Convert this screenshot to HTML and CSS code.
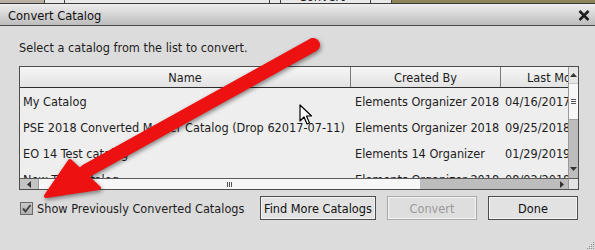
FILE: index.html
```html
<!DOCTYPE html>
<html>
<head>
<meta charset="utf-8">
<link rel="stylesheet" href="styles.css">
</head>
<body>
<div class="strip">
  <div class="strip-photo"></div>
  <div class="strip-cell w20"></div>
  <div class="strip-cell grow"></div>
  <div class="strip-cell w11"></div>
  <div class="strip-cell w90"><span class="strip-text">Convert</span></div>
  <div class="strip-cell w21"></div>
  <div class="strip-photo2"></div>
</div>
<div class="dialog">
  <div class="titlebar">
    <span class="title">Convert Catalog</span>
    <svg class="close" width="12" height="11" viewBox="0 0 12 11"><path d="M1.5 1 L10.5 10 M10.5 1 L1.5 10" stroke="#1e1e1e" stroke-width="2.6" fill="none"/></svg>
  </div>
  <div class="content">
    <p class="intro">Select a catalog from the list to convert.</p>
    <div class="table">
      <div class="viewport">
        <div class="row head">
          <div class="c c1">Name</div>
          <div class="c c2">Created By</div>
          <div class="c c3">Last Modified</div>
        </div>
        <div class="row">
          <div class="c c1">My Catalog</div>
          <div class="c c2">Elements Organizer 2018</div>
          <div class="c c3">04/16/2017</div>
        </div>
        <div class="row">
          <div class="c c1">PSE 2018 Converted Master Catalog (Drop 62017-07-11)</div>
          <div class="c c2">Elements Organizer 2018</div>
          <div class="c c3">09/25/2018</div>
        </div>
        <div class="row">
          <div class="c c1">EO 14 Test catalog</div>
          <div class="c c2">Elements 14 Organizer</div>
          <div class="c c3">01/29/2019</div>
        </div>
        <div class="row">
          <div class="c c1">New Test catalog</div>
          <div class="c c2">Elements Organizer 2018</div>
          <div class="c c3">08/02/2018</div>
        </div>
      </div>
      <div class="vscroll">
        <div class="vbtn">
          <svg width="7" height="4" viewBox="0 0 7 4"><path d="M0 4 L3.5 0 L7 4 Z" fill="#333"/></svg>
        </div>
        <div class="vthumb"><span class="grip-h"></span></div>
        <div class="vtrack"></div>
        <div class="vbtn down">
          <svg width="7" height="4" viewBox="0 0 7 4"><path d="M0 0 L3.5 4 L7 0 Z" fill="#333"/></svg>
        </div>
      </div>
      <div class="hscroll">
        <div class="hbtn">
          <svg width="4" height="7" viewBox="0 0 4 7"><path d="M4 0 L0 3.5 L4 7 Z" fill="#333"/></svg>
        </div>
        <div class="hthumb"><span class="grip-v"></span></div>
        <div class="htrack">
          <svg width="4" height="7" viewBox="0 0 4 7"><path d="M0 0 L4 3.5 L0 7 Z" fill="#333"/></svg>
        </div>
      </div>
      <div class="corner"></div>
    </div>
    <div class="footer">
      <label class="check">
        <span class="box">
          <svg width="11" height="11" viewBox="0 0 11 11"><path d="M2 5.5 L4.5 8.5 L9.5 2" stroke="#444" stroke-width="2" fill="none"/></svg>
        </span>
        Show Previously Converted Catalogs
      </label>
      <div class="buttons">
        <button class="btn find">Find More Catalogs</button>
        <button class="btn disabled">Convert</button>
        <button class="btn done">Done</button>
      </div>
    </div>
  </div>
  <div class="grip-corner">
    <svg width="10" height="10" viewBox="0 0 10 10" fill="#8a8a8a">
      <rect x="8" y="2" width="1" height="1"/><rect x="6" y="4" width="1" height="1"/><rect x="8" y="4" width="1" height="1"/>
      <rect x="4" y="6" width="1" height="1"/><rect x="6" y="6" width="1" height="1"/><rect x="8" y="6" width="1" height="1"/>
      <rect x="2" y="8" width="1" height="1"/><rect x="4" y="8" width="1" height="1"/><rect x="6" y="8" width="1" height="1"/><rect x="8" y="8" width="1" height="1"/>
    </svg>
  </div>
</div>

<svg class="arrow" width="595" height="250" viewBox="0 0 595 250">
  <line x1="313" y1="45" x2="86" y2="171" stroke="#ee1111" stroke-width="14" stroke-linecap="round"/>
  <path d="M46 196 L70 161 L99 188 Z" fill="#ee1111" stroke="#ee1111" stroke-width="4" stroke-linejoin="round"/>
</svg>

<svg class="cursor" width="14" height="22" viewBox="0 0 14 22">
  <path d="M1 1 L1 17 L5 13 L8 20 L10.5 19 L7.5 12 L12.5 12 Z" fill="#fff" stroke="#000" stroke-width="1.2" stroke-linejoin="round"/>
</svg>
</body>
</html>
```
FILE: styles.css
```css
* { box-sizing: border-box; }
html, body { margin: 0; padding: 0; }
body {
  width: 595px;
  height: 250px;
  overflow: hidden;
  background: #dcdcdc;
  font-family: "DejaVu Sans Condensed", "DejaVu Sans", sans-serif;
  font-size: 12.6px;
  color: #1c1c1c;
  position: relative;
}
.strip {
  display: flex;
  height: 4px;
  background: #e9e9e9;
  border-bottom: 1px solid #3a3a3a;
}
.strip-photo { width: 45px; background: #b9b2a2; border-right: 1px solid #444; }
.strip-photo2 { flex: 1; background: #8d8456; }
.strip-cell { border-right: 1px solid #444; position: relative; overflow: hidden; }
.w20 { width: 20px; }
.w11 { width: 11px; }
.w21 { width: 21px; }
.w90 { width: 90px; }
.grow { flex: 1; }
.strip-text { position: absolute; left: 18px; top: -11px; font-size: 13px; }

.dialog { height: 246px; display: flex; flex-direction: column; position: relative; }
.titlebar {
  height: 22px;
  background: linear-gradient(#ededed, #bdbdbd);
  border-bottom: 1px solid #4a4a4a;
  display: flex;
  align-items: center;
  justify-content: space-between;
  padding: 1px 5px 0 8px;
}
.title { font-size: 12.8px; color: #111; }
.close { display: block; }

.content { padding: 13px 17px 0 19px; }
.intro { margin: 0 0 10px 0; line-height: 17px; }

.table {
  width: 560px;
  height: 124px;
  border: 1px solid #4d4d4d;
  display: grid;
  grid-template-columns: 1fr 10px;
  grid-template-rows: 1fr 11px;
  background: #eeeeee;
}
.viewport { overflow: hidden; }
.row { display: flex; height: 26px; align-items: center; white-space: nowrap; }
.row.head {
  height: 21px;
  background: linear-gradient(#f6f6f6, #e3e3e3);
  border-bottom: 1px solid #2e2e2e;
}
.c { flex: none; overflow: hidden; padding-left: 3px; }
.c1 { width: 331px; }
.c2 { width: 150px; padding-left: 4px; }
.c3 { width: 140px; padding-left: 4px; }
.head .c { height: 100%; display: flex; align-items: center; justify-content: center; padding: 0; border-right: 1px solid #7a7a7a; }
.head .c3 { justify-content: flex-start; padding-left: 26px; border-right: 0; }

.vscroll { display: flex; flex-direction: column; background: #bdbdbd; border-left: 1px solid #9a9a9a; }
.vbtn { height: 16px; background: #e6e6e6; display: flex; align-items: center; justify-content: center; }
.vbtn.down { background: #bdbdbd; height: 13px; align-items: flex-start; padding-top: 2px; }
.vthumb { height: 37px; background: #f7f7f7; border-top: 1px solid #c8c8c8; border-bottom: 1px solid #a0a0a0; display: flex; align-items: center; justify-content: center; }
.vtrack { flex: 1; }
.grip-h { width: 5px; height: 5px; border-top: 1px solid #555; border-bottom: 1px solid #555; position: relative; }
.grip-h::after { content: ""; position: absolute; left: 0; right: 0; top: 1px; border-top: 1px solid #555; }

.hscroll { display: flex; background: #bdbdbd; border-top: 1px solid #5a5a5a; }
.hbtn { width: 19px; background: #c4c4c4; border-right: 1px solid #9a9a9a; display: flex; align-items: center; justify-content: center; }
.hthumb { width: 381px; background: #f7f7f7; display: flex; align-items: center; justify-content: center; }
.htrack { flex: 1; display: flex; align-items: center; justify-content: flex-end; padding-right: 4px; }
.grip-v { width: 5px; height: 5px; border-left: 1px solid #555; border-right: 1px solid #555; position: relative; }
.grip-v::after { content: ""; position: absolute; top: 0; bottom: 0; left: 1px; border-left: 1px solid #555; }
.corner { background: #e4e4e4; border-top: 1px solid #5a5a5a; border-left: 1px solid #9a9a9a; }

.footer { display: flex; justify-content: space-between; align-items: center; margin-top: 6px; width: 559px; }
.check { display: flex; align-items: center; gap: 4px; margin-left: 1px; }
.box {
  width: 13px; height: 13px;
  border: 1px solid #6a6a6a;
  background: linear-gradient(#c9c9c9, #b0b0b0);
  display: flex; align-items: center; justify-content: center;
}
.box svg { display: block; }
.buttons { display: flex; gap: 11px; }
.btn {
  height: 24px;
  font-family: inherit;
  font-size: 12.6px;
  color: #111;
  background: #e2e2e2;
  border: 1px solid #4d4d4d;
  box-shadow: inset 0 0 0 1px #f4f4f4;
  padding: 0;
}
.find { width: 116px; }
.disabled { width: 90px; color: #9a9a9a; border-color: #a8a8a8; background: #dedede; }
.done { width: 90px; }

.grip-corner { position: absolute; right: 0; bottom: 0; width: 10px; height: 10px; }
.grip-corner svg { display: block; }

.arrow { position: absolute; left: 0; top: 0; pointer-events: none; filter: drop-shadow(1px 2px 2px rgba(0,0,0,0.45)); }
.cursor { position: absolute; left: 299px; top: 104px; pointer-events: none; }
```
